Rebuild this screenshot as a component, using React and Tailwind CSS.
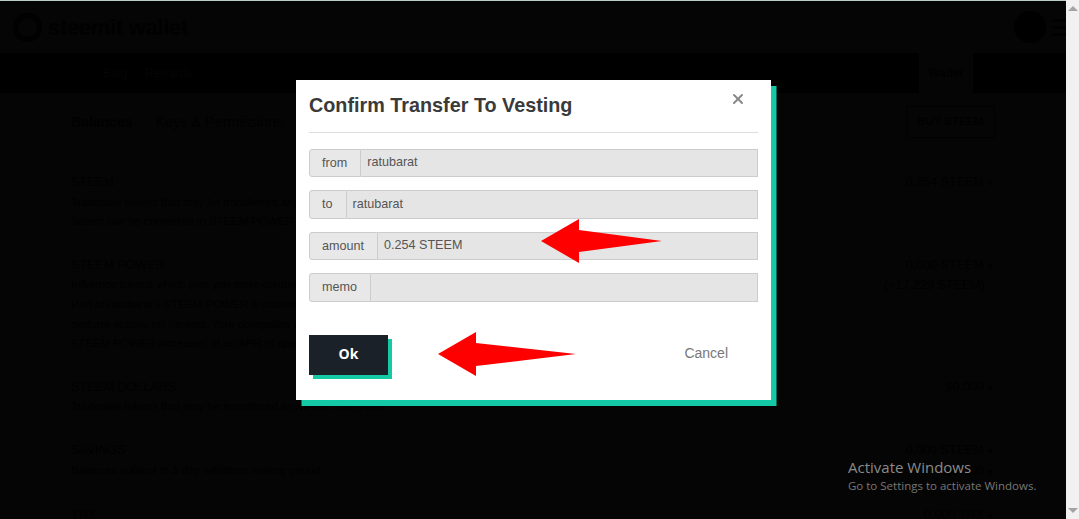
import { X } from 'lucide-react';

const rows = [
  {
    title: 'STEEM',
    lines: [
      'Tradeable tokens that may be transferred anywhere at anytime.',
      'Steem can be converted to STEEM POWER in a process called powering up.',
    ],
    values: ['0.254 STEEM'],
  },
  {
    title: 'STEEM POWER',
    lines: [
      'Influence tokens which give you more control over post payouts and allow you to earn on curation.',
      "Part of ratubarat's STEEM POWER is currently delegated. Delegation is donated for influence or to",
      'perform actions on Steemit. Your delegation amount can fluctuate over time at any moment.',
      'STEEM POWER increases at an APR of approximately 3.00%, subject to blockchain variance.',
    ],
    values: ['0.000 STEEM', '(+17.229 STEEM)'],
  },
  {
    title: 'STEEM DOLLARS',
    lines: ['Tradeable tokens that may be transferred anywhere at anytime.'],
    values: ['$0.000'],
  },
  {
    title: 'SAVINGS',
    lines: ['Balances subject to 3 day withdraw waiting period.'],
    values: ['0.000 STEEM', '$0.000'],
  },
  { title: 'TRX', lines: ['Tradeable tokens on the TRON network.'], values: ['0.000 TRX'] },
];

const fields = [
  { label: 'from', value: 'ratubarat' },
  { label: 'to', value: 'ratubarat' },
  { label: 'amount', value: '0.254 STEEM' },
  { label: 'memo', value: '' },
];

function BalanceRow({ row }) {
  return (
    <div className="flex justify-between mb-6 leading-[19.6px] whitespace-nowrap">
      <div>
        <div className="text-[12.5px]">{row.title}</div>
        {row.lines.map((line) => (
          <div key={line} className="text-[11.3px]">{line}</div>
        ))}
      </div>
      <div className="flex flex-col items-end text-[12.6px]">
        {row.values.map((value) => (
          <div key={value} className={value.startsWith('(') ? 'mr-2' : ''}>
            {value}
            {!value.startsWith('(') && <span className="ml-1 text-[9px]">▾</span>}
          </div>
        ))}
      </div>
    </div>
  );
}

function Field({ label, value }) {
  return (
    <div className="flex h-[28.5px] mb-[13px] text-[12.6px] text-[#555]">
      <div className="flex items-center pl-3 pr-[13px] pt-px bg-[#e8e8e8] border border-[#ccc] rounded-l-[3px]">{label}</div>
      <div className="flex items-center flex-1 px-[6px] bg-[#e5e5e5] border border-l-0 border-[#ccc]">{value}</div>
    </div>
  );
}

export default function App() {
  return (
    <div className="relative flex h-[519px] overflow-hidden bg-[#050505] font-['Liberation_Sans',Arial,sans-serif]">
      <div className="flex-1 min-w-0 overflow-hidden text-[#010101]">
        <div className="h-px bg-[#b9cdc9]" />
        {/* header */}
        <div className="flex items-center justify-between h-[52px] pl-[13px]">
          <div className="flex items-center gap-[6px]">
            <div className="w-[29px] h-[29px] rounded-full border-[5px] border-[#010101]" />
            <span className="text-[22px] font-bold tracking-[-0.3px]">steemit wallet</span>
          </div>
          <div className="flex items-center gap-[6px]">
            <div className="w-[32px] h-[32px] rounded-full bg-[#000]" />
            <div className="flex flex-col gap-[4px] w-[14px]">
              <div className="h-[3px] bg-[#010101]" />
              <div className="h-[3px] bg-[#010101]" />
              <div className="h-[3px] bg-[#010101]" />
            </div>
          </div>
        </div>
        {/* nav */}
        <div className="flex items-stretch h-[40px] pl-[103px] bg-black text-[#050505] text-[12px]">
          <span className="self-center">Blog</span>
          <span className="self-center ml-[18px]">Rewards</span>
          <div className="flex items-center justify-center w-[54px] ml-auto mr-[93px] bg-[#050505] font-bold text-[#010101]">
            Wallet
          </div>
        </div>
        {/* tabs */}
        <div className="flex items-center justify-between h-[32px] mt-[13px] ml-[71px] mr-[71px] text-[14px]">
          <div className="flex gap-[23px] pt-[2px]">
            <span className="font-bold">Balances</span>
            <span className="text-[14.4px]">Keys &amp; Permissions</span>
          </div>
          <div className="flex items-center justify-center w-[89px] h-[32px] border border-[#010101] text-[11.5px] font-bold">
            BUY STEEM
          </div>
        </div>
        <div className="ml-[71px] mr-[73px] mt-[35px]">
          {rows.map((row) => (
            <BalanceRow key={row.title} row={row} />
          ))}
        </div>
      </div>

      {/* scrollbar */}
      <div className="flex flex-col justify-between items-center w-[13px] py-[6px] bg-[#f1f1f1]">
        <div className="w-0 h-0 border-x-[5px] border-x-transparent border-b-[5px] border-b-[#a3a3a3]" />
        <div className="w-0 h-0 border-x-[5px] border-x-transparent border-t-[5px] border-t-[#a3a3a3]" />
      </div>

      {/* modal */}
      <div className="absolute left-[296px] top-[80px] w-[475px] h-[320px] bg-white px-[13px] pt-[12px] shadow-[5.5px_6px_0_0_#14c9a5]">
        <div className="flex items-start justify-between border-b border-[#ddd] h-[40.5px] text-[#3a3a3a]">
          <h2 className="text-[19.8px] leading-[26px] font-bold">Confirm Transfer To Vesting</h2>
          <X className="mt-[-1px] mr-[12px] text-[#888]" size={16} strokeWidth={3} />
        </div>
        <div className="mt-[16px] mb-[20px]">
          {fields.map((field) => (
            <Field key={field.label} label={field.label} value={field.value} />
          ))}
        </div>
        <div className="flex items-center justify-between mt-[33px]">
          <button className="w-[79px] h-[40px] pb-[2px] bg-[#1a2128] text-white text-[14px] font-bold font-['Open_Sans',sans-serif] shadow-[4px_4px_0_0_#14c9a5]">
            Ok
          </button>
          <span className="mr-[30px] mb-[2px] text-[14px] text-[#777]">Cancel</span>
        </div>
      </div>

      {/* annotation arrows */}
      <svg className="absolute left-[438px] top-[332px]" width="138" height="45" viewBox="0 0 138 45">
        <polygon points="0,22 38,0 38,11 138,22 38,34 38,44" fill="#ff0000" />
      </svg>
      <svg className="absolute left-[541px] top-[219px]" width="121" height="44" viewBox="0 0 121 44">
        <polygon points="0,22 38,0 38,11 121,22 38,33 38,44" fill="#ff0000" />
      </svg>

      {/* activation watermark */}
      <div className="absolute left-[848px] top-[457px] font-['Open_Sans',sans-serif] text-[#8a8a8a]">
        <div className="text-[15px] leading-[21px]">Activate Windows</div>
        <div className="text-[11.5px] leading-[16px] text-[#777]">Go to Settings to activate Windows.</div>
      </div>
    </div>
  );
}
